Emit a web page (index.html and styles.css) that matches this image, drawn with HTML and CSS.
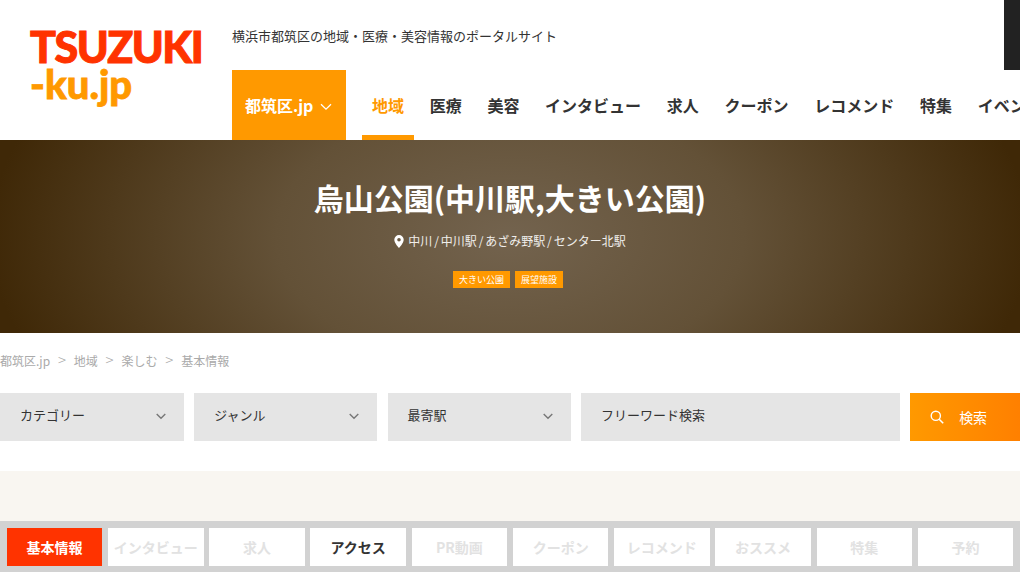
FILE: index.html
```html
<!DOCTYPE html>
<html lang="ja">
<head>
<meta charset="utf-8">
<title>烏山公園</title>
<link rel="stylesheet" href="styles.css">
</head>
<body>
<header class="header">
  <a class="logo">
    <span class="logo-main">TSUZUKI</span>
    <span class="logo-sub">-ku.jp</span>
  </a>
  <div class="header-body">
    <div class="header-top">
      <p class="tagline">横浜市都筑区の地域・医療・美容情報のポータルサイト</p>
      <div class="corner"></div>
    </div>
    <nav class="nav">
      <div class="site-select">都筑区.jp
        <svg class="chev-w" width="12" height="8" viewBox="0 0 12 8"><path d="M1 1.200l5 5 5-5" fill="none" stroke="#fff" stroke-width="1.300"/></svg>
      </div>
      <ul class="menu">
        <li class="menu-item active">地域</li>
        <li class="menu-item">医療</li>
        <li class="menu-item">美容</li>
        <li class="menu-item">インタビュー</li>
        <li class="menu-item">求人</li>
        <li class="menu-item">クーポン</li>
        <li class="menu-item">レコメンド</li>
        <li class="menu-item">特集</li>
        <li class="menu-item">イベント</li>
      </ul>
    </nav>
  </div>
</header>
<section class="hero">
  <h1 class="hero-title">烏山公園(中川駅,大きい公園)</h1>
  <p class="hero-loc">
    <svg width="10" height="13" viewBox="0 0 10 13"><path fill-rule="evenodd" fill="#fff" d="M5 0a4.700 4.700 0 0 0-4.700 4.700C.3 8 5 13 5 13s4.700-5 4.700-8.300A4.700 4.700 0 0 0 5 0zm0 6.500a1.800 1.800 0 1 1 0-3.600 1.800 1.800 0 0 1 0 3.600z"/></svg>
    <span>中川<i class="slash">/</i>中川駅<i class="slash">/</i>あざみ野駅<i class="slash">/</i>センター北駅</span>
  </p>
  <div class="tags"><span class="tag">大きい公園</span><span class="tag">展望施設</span></div>
</section>
<ol class="crumbs">
  <li>都筑区.jp</li><li class="sep">&gt;</li><li>地域</li><li class="sep">&gt;</li><li>楽しむ</li><li class="sep">&gt;</li><li>基本情報</li>
</ol>
<form class="search">
  <div class="field sel first">カテゴリー<svg width="10" height="7" viewBox="0 0 10 7"><path d="M.7 1L5 5.300 9.300 1" fill="none" stroke="#777" stroke-width="1.400"/></svg></div>
  <div class="field sel">ジャンル<svg width="10" height="7" viewBox="0 0 10 7"><path d="M.7 1L5 5.300 9.300 1" fill="none" stroke="#777" stroke-width="1.400"/></svg></div>
  <div class="field sel">最寄駅<svg width="10" height="7" viewBox="0 0 10 7"><path d="M.7 1L5 5.300 9.300 1" fill="none" stroke="#777" stroke-width="1.400"/></svg></div>
  <div class="field word">フリーワード検索</div>
  <div class="go"><svg width="14" height="14" viewBox="0 0 14 14"><circle cx="5.800" cy="5.800" r="4.600" fill="none" stroke="#fff" stroke-width="1.400"/><path d="M9.200 9.200l4 4" stroke="#fff" stroke-width="1.600"/></svg><span>検索</span></div>
</form>
<div class="band"></div>
<nav class="tabs">
  <a class="tab current">基本情報</a>
  <a class="tab">インタビュー</a>
  <a class="tab">求人</a>
  <a class="tab on">アクセス</a>
  <a class="tab">PR動画</a>
  <a class="tab">クーポン</a>
  <a class="tab">レコメンド</a>
  <a class="tab">おススメ</a>
  <a class="tab">特集</a>
  <a class="tab">予約</a>
</nav>
</body>
</html>
```
FILE: styles.css
```css
* { box-sizing: border-box; }
html, body { margin: 0; padding: 0; }
body {
  width: 1020px;
  height: 580px;
  overflow: hidden;
  background: #fff;
  color: #333;
  font-family: "Noto Sans CJK JP", "Noto Sans", sans-serif;
}
.header { display: flex; height: 140px; }
.logo {
  width: 232px;
  flex: none;
  padding: 31px 0 0 30px;
  display: flex;
  flex-direction: column;
  gap: 6px;
}
.logo-main {
  font-family: "Lato", sans-serif;
  font-weight: 900;
  font-size: 43px;
  line-height: 32px;
  color: #ff3300;
  letter-spacing: -1.500px;
  -webkit-text-stroke: 1px #ff3300;
}
.logo-sub {
  font-family: "Lato", sans-serif;
  font-weight: 900;
  font-size: 40px;
  line-height: 30px;
  color: #ff9900;
  -webkit-text-stroke: 0.800px #ff9900;
}
.header-body { flex: 1; min-width: 0; }
.header-top { height: 70px; display: flex; justify-content: space-between; }
.tagline { margin: 26px 0 0; font-size: 13px; line-height: 20px; color: #333; }
.corner { width: 16px; height: 70px; background: #222; }
.nav { display: flex; height: 70px; }
.site-select {
  width: 114px;
  flex: none;
  background: #ff9900;
  color: #fff;
  font-weight: 700;
  font-size: 16px;
  display: flex;
  align-items: center;
  padding-left: 13px;
  gap: 7px;
}
.chev-w { margin-top: 4px; }
.menu {
  list-style: none;
  margin: 0 0 0 16px;
  padding: 0;
  display: flex;
  gap: 5.700px;
  white-space: nowrap;
}
.menu-item {
  padding: 0 10px;
  font-size: 16px;
  font-weight: 700;
  line-height: 70px;
  height: 70px;
  color: #333;
}
.menu-item.active { color: #ff9900; border-bottom: 5px solid #ff9900; }
.hero {
  height: 193px;
  background: radial-gradient(ellipse 520px 300px at 50% 50%, #73634e 0%, #635137 45%, #3f2807 100%);
  color: #fff;
  text-align: center;
  padding-top: 35px;
}
.hero-title { margin: 0; font-size: 30px; line-height: 44px; font-weight: 700; }
.hero-loc {
  margin: 12px 0 0;
  height: 20px;
  font-size: 12px;
  line-height: 20px;
  display: flex;
  justify-content: center;
  align-items: center;
  gap: 4px;
  color: #f0eeeb;
}
.slash { font-style: normal; margin: 0 1.850px; }
.tags { display: flex; justify-content: center; gap: 5px; margin-top: 20px; padding-right: 4px; }
.tag {
  background: #ff9900;
  color: #fff;
  font-size: 9px;
  line-height: 17px;
  height: 17px;
  padding: 0 6px;
}
.crumbs {
  list-style: none;
  margin: 0;
  padding: 0 0 6px;
  height: 60px;
  display: flex;
  align-items: center;
  font-size: 12px;
  color: #aaa;
}
.crumbs .sep { width: 23.700px; text-align: center; font-size: 15px; line-height: 18px; font-weight: 300; }
.search { display: flex; gap: 10.200px; height: 48px; font-size: 13px; }
.field {
  background: #e5e5e5;
  display: flex;
  align-items: center;
  justify-content: space-between;
  padding: 0 18px 6px 20px;
  color: #333;
}
.field svg { margin-top: 5px; }
.sel { width: 183.200px; }
.sel.first { width: 184px; }
.word { width: 319px; }
.go {
  flex: 1;
  font-size: 14px;
  background: linear-gradient(90deg, #ff9900, #ff8000);
  color: #fff;
  display: flex;
  align-items: center;
  padding-left: 20px;
  gap: 15px;
}
.band { height: 50px; margin-top: 30px; background: #f9f6f1; }
.tabs {
  height: 51px;
  background: #d2d2d2;
  padding: 7px 0 6px 6.800px;
  display: flex;
  gap: 5.720px;
}
.tab {
  flex: none;
  width: 95.500px;
  background: #fff;
  color: #e2e2e2;
  font-size: 14px;
  font-weight: 700;
  display: flex;
  align-items: center;
  justify-content: center;
}
.tab.current { background: #ff3300; color: #fff; }
.tab.on { color: #333; }
```
